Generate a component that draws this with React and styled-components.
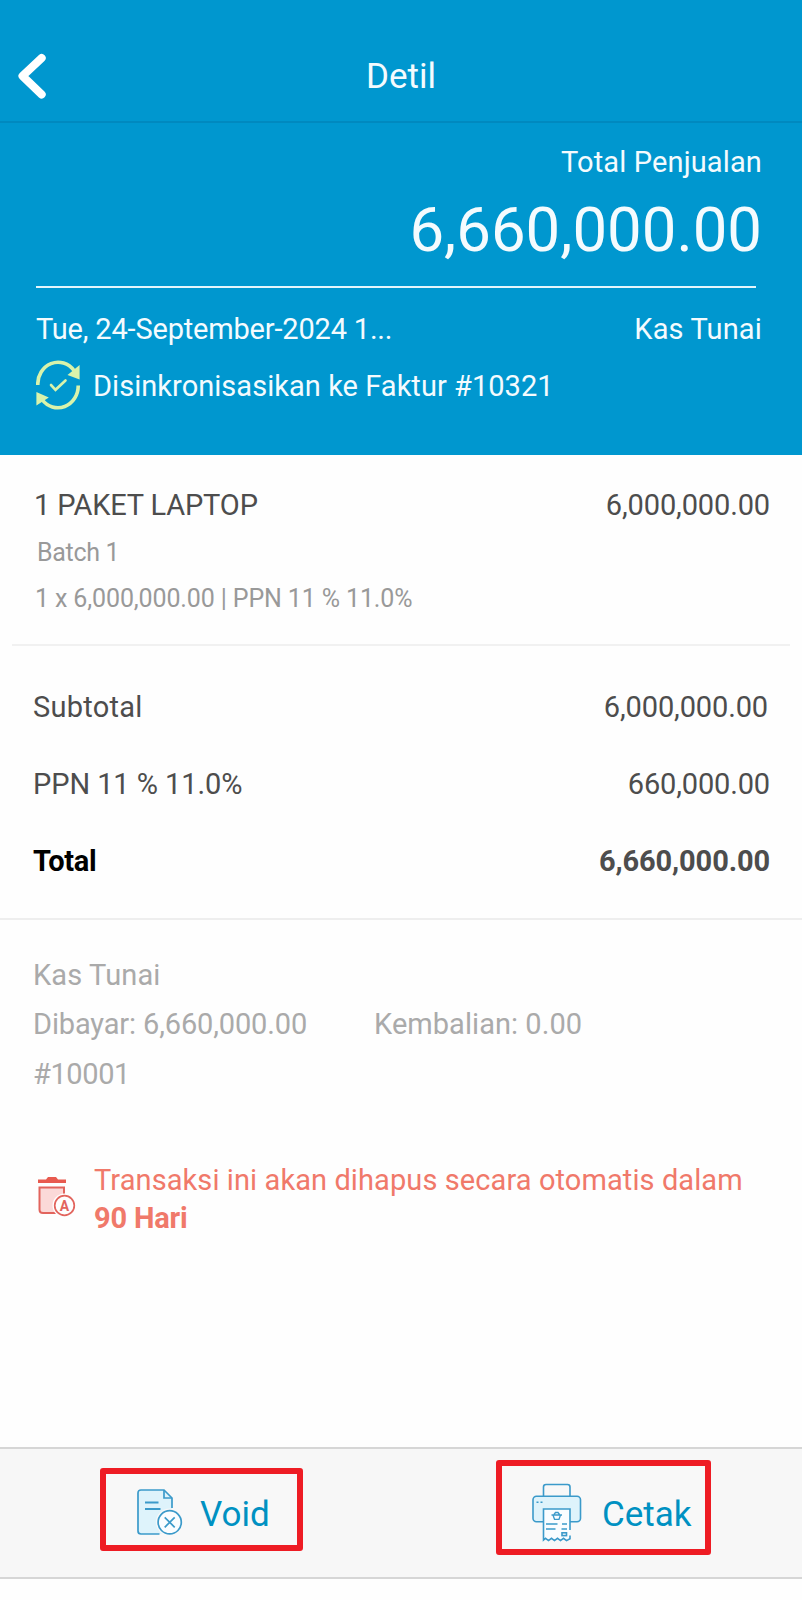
import styled, { createGlobalStyle } from 'styled-components'

const GlobalStyle = createGlobalStyle`
  * {
    box-sizing: border-box;
  }

  body {
    margin: 0;
    background: #fefefe;
    font-family: Roboto, 'Noto Sans', sans-serif;
  }
`

const Screen = styled.div`
  display: flex;
  flex-direction: column;
  width: 802px;
  height: 1600px;
  overflow: hidden;
`

const Text = styled.span`
  color: ${({ color }) => color || 'inherit'};
  font-size: ${({ $size }) => $size || 29}px;
  font-weight: ${({ $bold }) => ($bold ? 700 : 400)};
  letter-spacing: ${({ $spacing }) => $spacing || 0}px;
  line-height: 40px;
  white-space: nowrap;
`

const NavBar = styled.header`
  display: grid;
  grid-template-columns: 100px 1fr 100px;
  align-items: center;
  height: 123px;
  padding-top: 31px;
  background: #0097cf;
  border-bottom: 2px solid #0089bf;
  color: #f4fbfe;
  text-align: center;
`

const Title = styled.h1`
  margin: 0;
  padding-top: 1px;
  font-size: 35px;
  font-weight: 400;
  line-height: 40px;
`

const BackButton = styled.button`
  display: flex;
  width: 60px;
  margin: 0;
  padding: 0 0 0 16px;
  border: 0;
  background: none;
`

const Summary = styled.section`
  display: flex;
  flex-direction: column;
  height: 332px;
  padding: 19px 40px 0 36px;
  background: #0097cf;
  color: #f4fbfe;
`

const GrandTotal = styled.div`
  margin-top: 18px;
  font-size: 61.7px;
  line-height: 60px;
  text-align: right;
`

const SummaryLabel = styled.div`
  display: flex;
  justify-content: flex-end;
`

const Rule = styled.hr`
  flex: none;
  width: 720px;
  height: 2px;
  margin: 26px 0 0;
  border: 0;
  background: #e3f5fc;
`

const SummaryRow = styled.div`
  display: flex;
  justify-content: space-between;
  margin-top: 21px;
`

const SyncRow = styled.div`
  display: flex;
  align-items: flex-start;
  gap: 13px;
  margin-top: 11px;

  > span {
    padding-top: 6px;
  }
`

const Item = styled.section`
  display: flex;
  flex-direction: column;
  height: 191px;
  margin: 0 12px;
  padding: 30px 20px 0 22px;
  border-bottom: 2px solid #f1f1f1;
  color: #4d4d4d;
`

const Row = styled.div`
  display: flex;
  justify-content: space-between;
  padding-right: ${({ $inset }) => $inset || 0}px;
`

const Detail = styled.div`
  display: flex;
  margin-top: ${({ $top }) => $top}px;
  padding-left: ${({ $left }) => $left}px;
  color: #999;
`

const Totals = styled.section`
  display: flex;
  flex-direction: column;
  gap: 37px;
  height: 274px;
  padding: 41px 32px 0 33px;
  border-bottom: 2px solid #eee;
  color: #4d4d4d;
`

const Payment = styled.section`
  display: grid;
  grid-template-columns: 341px 1fr;
  grid-auto-rows: 49.5px;
  height: 240px;
  padding: 34.5px 33px 0;
  color: #aaa;
`

const FullRow = styled.div`
  grid-column: 1 / -1;
`

const Notice = styled.section`
  display: flex;
  flex: 1;
  gap: 17px;
  padding: 2px 33px 0 36px;
  color: #f0796a;

  svg {
    margin-top: 15px;
  }
`

const NoticeText = styled.p`
  display: flex;
  flex-direction: column;
  margin: 0;

  > * {
    line-height: 37.5px;
  }
`

const Footer = styled.footer`
  display: flex;
  justify-content: space-between;
  align-items: flex-start;
  height: 132px;
  margin-bottom: 21px;
  padding: 11px 91px 0 100px;
  background: #f7f7f7;
  border: solid #d6d6d6;
  border-width: 2px 0;
`

const Action = styled.button`
  display: flex;
  align-items: flex-start;
  gap: ${({ $gap }) => $gap}px;
  width: ${({ $width }) => $width}px;
  height: ${({ $height }) => $height}px;
  margin: ${({ $top }) => $top || 0}px 0 0;
  padding: ${({ $pad }) => $pad};
  border: 6px solid #ee1c24;
  border-radius: 3px;
  background: #f8f8f8;
  color: #0091c2;
  font-family: inherit;

  > span {
    padding-top: ${({ $drop }) => $drop}px;
  }
`

const BackIcon = () => (
  <svg width="34" height="50" viewBox="0 0 34 50" fill="none">
    <path
      d="M25.7 7 L6.5 25 L25.7 43.5"
      stroke="#fff"
      strokeWidth="8"
      strokeLinecap="round"
      strokeLinejoin="round"
    />
  </svg>
)

const SyncIcon = () => (
  <svg width="44" height="50" viewBox="0 0 44 50" fill="none">
    <g stroke="#d9f3ab" strokeWidth="3.6">
      <path d="M1.8 25 A20.3 21.8 0 0 1 38 10.5" />
      <path d="M42.2 25.5 A20.3 21.8 0 0 1 6 39.5" />
      <path d="M15 25 L19.5 29.8 L29.5 20.5" strokeWidth="2.6" strokeLinecap="round" />
    </g>
    <path d="M43.6 5 V19.5 L31.5 15 Z M.4 45.5 V32 L12.8 37.5 Z" fill="#d9f3ab" />
  </svg>
)

const TrashIcon = () => (
  <svg width="41" height="41" viewBox="0 0 41 41" fill="none">
    <path d="M2 2.5 H10 L12 0 H20 L22 2.5 H30 V6 H2 Z" fill="#e85a4f" />
    <path
      d="M3.5 10.5 H28 V36 H7 Q3.5 36 3.5 32.5 Z"
      fill="#fbd9d8"
      stroke="#e2645d"
      strokeWidth="2"
    />
    <circle cx="28.5" cy="28.5" r="12" fill="#fefefe" />
    <circle cx="28.5" cy="28.5" r="9.8" fill="#fefefe" stroke="#e2645d" strokeWidth="1.7" />
    <text
      x="28.5"
      y="33.5"
      fill="#e2645d"
      fontFamily="Roboto"
      fontSize="14"
      fontWeight="700"
      textAnchor="middle"
    >
      A
    </text>
  </svg>
)

const VoidIcon = () => (
  <svg width="46" height="46" viewBox="0 0 46 46" fill="none" stroke="#3b9aca" strokeWidth="1.7">
    <path d="M4 1 H27 L35 9 V45 H4 Q1 45 1 42 V4 Q1 1 4 1 Z" fill="#def3fb" stroke="none" />
    <circle cx="32.7" cy="33.3" r="13.8" fill="#f8f8f8" stroke="none" />
    <path d="M35 19 V9 L27 1 H4 Q1 1 1 4 V42 Q1 45 4 45 H22.5" />
    <path d="M27 1 V9 H35" />
    <path d="M8 13.5 H21.5 M8 20 H23.5" strokeWidth="2" />
    <circle cx="32.7" cy="33.3" r="11.6" fill="#fafdff" />
    <path d="M27.7 28.3 L37.7 38.3 M37.7 28.3 L27.7 38.3" />
  </svg>
)

const PrinterIcon = () => (
  <svg width="50" height="60" viewBox="0 0 50 60" fill="none" stroke="#3b9aca" strokeWidth="1.6">
    <path d="M11.5 13 V4 Q11.5 1.5 14 1.5 H35.5 Q38 1.5 38 4 V13" />
    <rect x="1" y="13.3" width="47.5" height="25.5" rx="3.5" fill="#def3fb" />
    <path
      d="M11.5 26 H38 V56 L35.8 57.5 L32.5 55 L29 57.5 L25.5 55 L22 57.5 L18.5 55 L15 57.5 L11.5 56 Z"
      fill="#fafdff"
      stroke="none"
    />
    <path d="M38 47 V26 H11.5 V57 L13.5 55.3 L16.5 57.6 L19.5 55.3 L22.5 57.6 L25.5 55.3 L28.5 57.6 L31.5 55.3 L34.5 57.6 L38 55.8 V52.5" />
    <path d="M4.5 19.2 H6.5 M8.5 19.2 H10.5" />
    <path
      d="M19.5 32 H30 M21 32 L22.5 36.3 H27 L28.5 32 M22 31.5 L23.5 29.5 H26 L27.5 31.5"
      strokeWidth="1.3"
    />
    <path d="M14 41 H25.5 M30 41 H35 M14 46 H23.5 M29.5 46 H35" />
    <rect x="30" y="49.8" width="4.5" height="2.8" />
  </svg>
)

const App = () => (
  <>
    <GlobalStyle />
    <Screen>
      <NavBar>
        <BackButton aria-label="Kembali">
          <BackIcon />
        </BackButton>
        <Title>Detil</Title>
      </NavBar>
      <Summary>
        <SummaryLabel>
          <Text $spacing={0.13}>Total Penjualan</Text>
        </SummaryLabel>
        <GrandTotal>6,660,000.00</GrandTotal>
        <Rule />
        <SummaryRow>
          <Text $spacing={-0.18}>Tue, 24-September-2024 1...</Text>
          <Text $spacing={0.15}>Kas Tunai</Text>
        </SummaryRow>
        <SyncRow>
          <SyncIcon />
          <Text $spacing={0.04}>Disinkronisasikan ke Faktur #10321</Text>
        </SyncRow>
      </Summary>
      <Item>
        <Row>
          <Text $spacing={-0.15}>1 PAKET LAPTOP</Text>
          <Text $spacing={-0.13}>6,000,000.00</Text>
        </Row>
        <Detail $top={8} $left={3}>
          <Text $size={25} $spacing={-0.3}>
            Batch 1
          </Text>
        </Detail>
        <Detail $top={6} $left={1}>
          <Text $size={25} $spacing={-0.13}>
            1 x 6,000,000.00 | PPN 11 % 11.0%
          </Text>
        </Detail>
      </Item>
      <Totals>
        <Row $inset={2}>
          <Text $spacing={0.25}>Subtotal</Text>
          <Text $spacing={-0.13}>6,000,000.00</Text>
        </Row>
        <Row>
          <Text $spacing={-0.08}>PPN 11 % 11.0%</Text>
          <Text $spacing={-0.15}>660,000.00</Text>
        </Row>
        <Row>
          <Text $bold $spacing={-0.3} color="#000">
            Total
          </Text>
          <Text $bold $spacing={-0.12}>
            6,660,000.00
          </Text>
        </Row>
      </Totals>
      <Payment>
        <FullRow>
          <Text $spacing={0.13}>Kas Tunai</Text>
        </FullRow>
        <Text $spacing={-0.14}>Dibayar: 6,660,000.00</Text>
        <Text $spacing={0.05}>Kembalian: 0.00</Text>
        <FullRow>
          <Text $spacing={-0.4}>#10001</Text>
        </FullRow>
      </Payment>
      <Notice>
        <TrashIcon />
        <NoticeText>
          <Text $spacing={0.09}>Transaksi ini akan dihapus secara otomatis dalam</Text>
          <Text $bold $spacing={-0.2}>
            90 Hari
          </Text>
        </NoticeText>
      </Notice>
      <Footer>
        <Action $width={203} $height={83} $top={8} $pad="15px 0 0 31px" $gap={17} $drop={6}>
          <VoidIcon />
          <Text $size={35}>Void</Text>
        </Action>
        <Action $width={215} $height={95} $pad="17px 0 0 30px" $gap={20} $drop={12}>
          <PrinterIcon />
          <Text $size={35}>Cetak</Text>
        </Action>
      </Footer>
    </Screen>
  </>
)

export default App
